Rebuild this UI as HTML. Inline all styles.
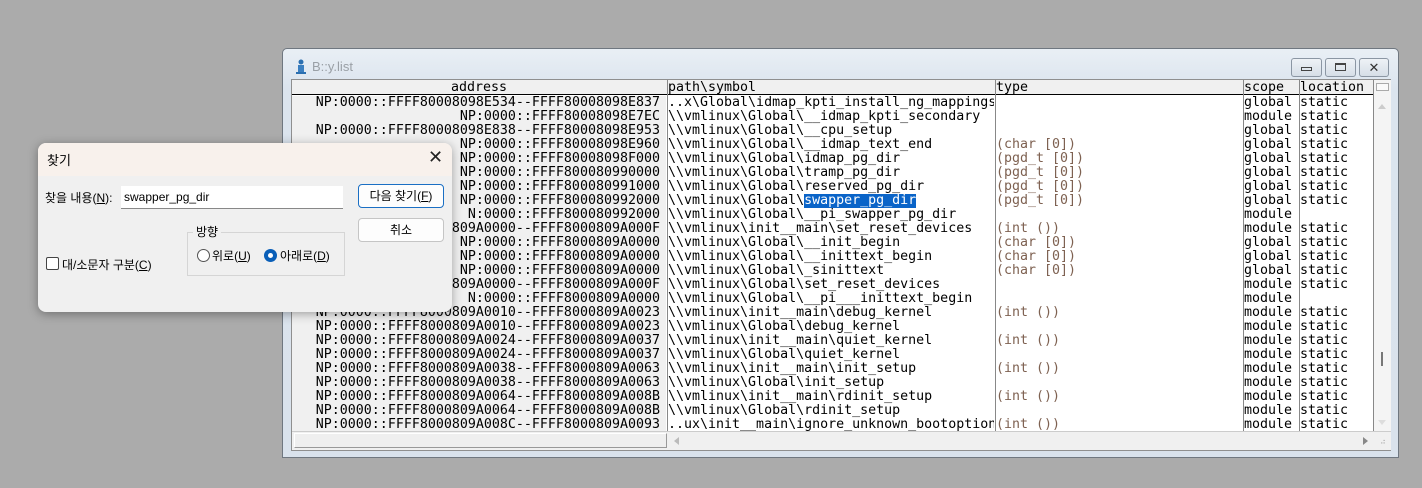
<!DOCTYPE html>
<html><head><meta charset="utf-8"><style>
*{margin:0;padding:0;box-sizing:border-box}
body{width:1422px;height:488px;background:#ababab;position:relative;overflow:hidden;font-family:"Liberation Sans","Noto Sans CJK KR",sans-serif}
.win{position:absolute;left:282px;top:48px;width:1117px;height:410px;border:1px solid #6f7780;border-radius:5px 5px 0 0;background:linear-gradient(#e9eff5,#dbe4ee 40px,#d9e2ec);}
.title{position:absolute;left:29px;top:10px;font-size:13px;color:#9aa0a6}
.wb{position:absolute;top:9px;height:19px;border:1px solid #8b96a3;border-radius:3px;background:linear-gradient(#eef2f6,#d6dee7)}
.client{position:absolute;left:8px;top:30px;width:1100px;height:372px;border:1px solid #8f8f8f;background:#fff}
.mono{font-family:"DejaVu Sans Mono","Liberation Mono",monospace;font-size:13.3px;line-height:14px;white-space:pre}
.row{position:absolute;left:0;height:14px;width:1082px}
.c{position:absolute;top:0;height:14px;overflow:hidden}
.a{left:0;width:374px;text-align:right;padding-right:6px;background:#f0f0f0}
.p{left:376px;width:326px}
.t{left:704px;width:246px;color:#7e6151}
.s{left:952px;width:54px;color:#000}
.l{left:1008px;width:72px}
.vl{position:absolute;top:0;width:1px;height:351px;background:#888}
.hdr{position:absolute;left:0;top:0;height:15px;width:1082px;border-bottom:1px solid #000;background:#f0f0f0}
.dlg{position:absolute;left:38px;top:143px;width:414px;height:169px;border-radius:8px;background:#f0f0f0;box-shadow:0 2px 10px rgba(0,0,0,.35);overflow:hidden;font-size:12px;color:#000}
.btn{position:absolute;left:320px;width:86px;height:24px;border:1px solid #c5c5c5;border-radius:4px;background:#fdfdfd;text-align:center;line-height:22px}
</style></head><body>
<div class="win">
 <svg style="position:absolute;left:12px;top:10px" width="12" height="16" viewBox="0 0 12 16"><circle cx="6" cy="3" r="2.5" fill="#2a6fb0"/><rect x="3" y="6" width="6" height="8" fill="#3b7fc0"/><rect x="1" y="13" width="10" height="2" fill="#2a6fb0"/></svg>
 <div class="title">B::y.list</div>
 <div class="wb" style="left:1008px;width:31px"><div style="position:absolute;left:9px;top:8px;width:11px;height:4px;border:1px solid #444"></div></div>
 <div class="wb" style="left:1042px;width:31px"><div style="position:absolute;left:9px;top:4px;width:11px;height:8px;border:1px solid #444;border-top-width:2px"></div></div>
 <div class="wb" style="left:1076px;width:30px;text-align:center;font-size:13px;line-height:17px;color:#333">✕</div>
 <div class="client">
  <div class="mono" style="position:absolute;left:0;top:0;width:1082px;height:351px;">
   <div class="hdr"></div>
   <div class="row" style="top:1px"><div class="c a" style="text-align:center;padding:0;background:none">address</div><div class="c p">path\symbol</div><div class="c t" style="color:#000">type</div><div class="c s">scope</div><div class="c l">location</div></div>
   <div class="vl" style="left:375px"></div><div class="vl" style="left:703px"></div><div class="vl" style="left:951px"></div><div class="vl" style="left:1007px"></div><div class="vl" style="left:1081px"></div>
   <div style="position:absolute;top:16px;left:0">
<div class="row" style="top:0"><div class="c a">NP:0000::FFFF80008098E534--FFFF80008098E837</div><div class="c p">..x\Global\idmap_kpti_install_ng_mappings</div><div class="c t"></div><div class="c s">global</div><div class="c l">static</div></div>
<div class="row" style="top:14px"><div class="c a">NP:0000::FFFF80008098E7EC</div><div class="c p">\\vmlinux\Global\__idmap_kpti_secondary</div><div class="c t"></div><div class="c s">module</div><div class="c l">static</div></div>
<div class="row" style="top:28px"><div class="c a">NP:0000::FFFF80008098E838--FFFF80008098E953</div><div class="c p">\\vmlinux\Global\__cpu_setup</div><div class="c t"></div><div class="c s">global</div><div class="c l">static</div></div>
<div class="row" style="top:42px"><div class="c a">NP:0000::FFFF80008098E960</div><div class="c p">\\vmlinux\Global\__idmap_text_end</div><div class="c t">(char [0])</div><div class="c s">global</div><div class="c l">static</div></div>
<div class="row" style="top:56px"><div class="c a">NP:0000::FFFF80008098F000</div><div class="c p">\\vmlinux\Global\idmap_pg_dir</div><div class="c t">(pgd_t [0])</div><div class="c s">global</div><div class="c l">static</div></div>
<div class="row" style="top:70px"><div class="c a">NP:0000::FFFF800080990000</div><div class="c p">\\vmlinux\Global\tramp_pg_dir</div><div class="c t">(pgd_t [0])</div><div class="c s">global</div><div class="c l">static</div></div>
<div class="row" style="top:84px"><div class="c a">NP:0000::FFFF800080991000</div><div class="c p">\\vmlinux\Global\reserved_pg_dir</div><div class="c t">(pgd_t [0])</div><div class="c s">global</div><div class="c l">static</div></div>
<div class="row" style="top:98px"><div class="c a">NP:0000::FFFF800080992000</div><div class="c p">\\vmlinux\Global\<span style="background:#0a64c8;color:#fff">swapper_pg_dir</span></div><div class="c t">(pgd_t [0])</div><div class="c s">global</div><div class="c l">static</div></div>
<div class="row" style="top:112px"><div class="c a">N:0000::FFFF800080992000</div><div class="c p">\\vmlinux\Global\__pi_swapper_pg_dir</div><div class="c t"></div><div class="c s">module</div><div class="c l"></div></div>
<div class="row" style="top:126px"><div class="c a">NP:0000::FFFF8000809A0000--FFFF8000809A000F</div><div class="c p">\\vmlinux\init__main\set_reset_devices</div><div class="c t">(int ())</div><div class="c s">module</div><div class="c l">static</div></div>
<div class="row" style="top:140px"><div class="c a">NP:0000::FFFF8000809A0000</div><div class="c p">\\vmlinux\Global\__init_begin</div><div class="c t">(char [0])</div><div class="c s">global</div><div class="c l">static</div></div>
<div class="row" style="top:154px"><div class="c a">NP:0000::FFFF8000809A0000</div><div class="c p">\\vmlinux\Global\__inittext_begin</div><div class="c t">(char [0])</div><div class="c s">global</div><div class="c l">static</div></div>
<div class="row" style="top:168px"><div class="c a">NP:0000::FFFF8000809A0000</div><div class="c p">\\vmlinux\Global\_sinittext</div><div class="c t">(char [0])</div><div class="c s">global</div><div class="c l">static</div></div>
<div class="row" style="top:182px"><div class="c a">NP:0000::FFFF8000809A0000--FFFF8000809A000F</div><div class="c p">\\vmlinux\Global\set_reset_devices</div><div class="c t"></div><div class="c s">module</div><div class="c l">static</div></div>
<div class="row" style="top:196px"><div class="c a">N:0000::FFFF8000809A0000</div><div class="c p">\\vmlinux\Global\__pi___inittext_begin</div><div class="c t"></div><div class="c s">module</div><div class="c l"></div></div>
<div class="row" style="top:210px"><div class="c a">NP:0000::FFFF8000809A0010--FFFF8000809A0023</div><div class="c p">\\vmlinux\init__main\debug_kernel</div><div class="c t">(int ())</div><div class="c s">module</div><div class="c l">static</div></div>
<div class="row" style="top:224px"><div class="c a">NP:0000::FFFF8000809A0010--FFFF8000809A0023</div><div class="c p">\\vmlinux\Global\debug_kernel</div><div class="c t"></div><div class="c s">module</div><div class="c l">static</div></div>
<div class="row" style="top:238px"><div class="c a">NP:0000::FFFF8000809A0024--FFFF8000809A0037</div><div class="c p">\\vmlinux\init__main\quiet_kernel</div><div class="c t">(int ())</div><div class="c s">module</div><div class="c l">static</div></div>
<div class="row" style="top:252px"><div class="c a">NP:0000::FFFF8000809A0024--FFFF8000809A0037</div><div class="c p">\\vmlinux\Global\quiet_kernel</div><div class="c t"></div><div class="c s">module</div><div class="c l">static</div></div>
<div class="row" style="top:266px"><div class="c a">NP:0000::FFFF8000809A0038--FFFF8000809A0063</div><div class="c p">\\vmlinux\init__main\init_setup</div><div class="c t">(int ())</div><div class="c s">module</div><div class="c l">static</div></div>
<div class="row" style="top:280px"><div class="c a">NP:0000::FFFF8000809A0038--FFFF8000809A0063</div><div class="c p">\\vmlinux\Global\init_setup</div><div class="c t"></div><div class="c s">module</div><div class="c l">static</div></div>
<div class="row" style="top:294px"><div class="c a">NP:0000::FFFF8000809A0064--FFFF8000809A008B</div><div class="c p">\\vmlinux\init__main\rdinit_setup</div><div class="c t">(int ())</div><div class="c s">module</div><div class="c l">static</div></div>
<div class="row" style="top:308px"><div class="c a">NP:0000::FFFF8000809A0064--FFFF8000809A008B</div><div class="c p">\\vmlinux\Global\rdinit_setup</div><div class="c t"></div><div class="c s">module</div><div class="c l">static</div></div>
<div class="row" style="top:322px"><div class="c a">NP:0000::FFFF8000809A008C--FFFF8000809A0093</div><div class="c p">..ux\init__main\ignore_unknown_bootoption</div><div class="c t">(int ())</div><div class="c s">module</div><div class="c l">static</div></div>
   </div>
  </div>
  <div style="position:absolute;left:1082px;top:0;width:17px;height:351px;background:#f4f4f4">
   <div style="position:absolute;left:2px;top:3px;width:13px;height:8px;border:1px solid #aaa;background:#fafafa"></div>
   <div style="position:absolute;left:4px;top:24px;border:4px solid transparent;border-bottom:5px solid #ccc;border-top:0"></div>
   <div style="position:absolute;left:7px;top:272px;width:2px;height:14px;background:#777"></div>
   <div style="position:absolute;left:4px;top:340px;border:4px solid transparent;border-top:5px solid #ddd;border-bottom:0"></div>
  </div>
  <div style="position:absolute;left:0;top:351px;width:1099px;height:19px;background:#f0f0f0;border-top:1px solid #ccc">
   <div style="position:absolute;left:2px;top:1px;width:373px;height:15px;border:1px solid #999;border-top-color:#fff;border-left-color:#fff;background:#efefef"></div>
   <div style="position:absolute;left:382px;top:5px;border:4px solid transparent;border-right:5px solid #bbb;border-left:0"></div>
   <div style="position:absolute;left:1071px;top:5px;border:4px solid transparent;border-left:5px solid #888;border-right:0"></div>
   <div style="position:absolute;left:1088px;top:6px;font-size:8px;color:#aaa;line-height:8px">⠴</div>
  </div>
 </div>
</div>

<div class="dlg">
 <div style="position:absolute;left:0;top:0;width:414px;height:33px;background:#f8f1ec"></div>
 <div style="position:absolute;left:9px;top:7px;font-size:13px">찾기</div>
 <div style="position:absolute;left:390px;top:4px;font-size:18px;font-weight:300;color:#222">✕</div>
 <div style="position:absolute;left:7px;top:46px">찾을 내용(<u>N</u>):</div>
 <div style="position:absolute;left:83px;top:43px;width:222px;height:23px;background:#fff;border-bottom:1px solid #888;padding:4px 3px;font-size:12px">swapper_pg_dir</div>
 <div class="btn" style="top:41px;border:1px solid #1a6fc4">다음 찾기(<u>F</u>)</div>
 <div class="btn" style="top:75px">취소</div>
 <div style="position:absolute;left:149px;top:89px;width:158px;height:44px;border:1px solid #d5d5d5"></div>
 <div style="position:absolute;left:155px;top:80px;background:#f0f0f0;padding:0 3px">방향</div>
 <div style="position:absolute;left:159px;top:106px;width:13px;height:13px;border:1px solid #555;border-radius:50%;background:#fff"></div>
 <div style="position:absolute;left:174px;top:104px">위로(<u>U</u>)</div>
 <div style="position:absolute;left:226px;top:106px;width:13px;height:13px;border-radius:50%;background:#0a5fb8"><div style="position:absolute;left:4px;top:4px;width:5px;height:5px;border-radius:50%;background:#fff"></div></div>
 <div style="position:absolute;left:242px;top:104px">아래로(<u>D</u>)</div>
 <div style="position:absolute;left:8px;top:114px;width:13px;height:13px;border:1px solid #444;border-radius:2px;background:#fff"></div>
 <div style="position:absolute;left:24px;top:113px">대/소문자 구분(<u>C</u>)</div>
</div>
</body></html>
